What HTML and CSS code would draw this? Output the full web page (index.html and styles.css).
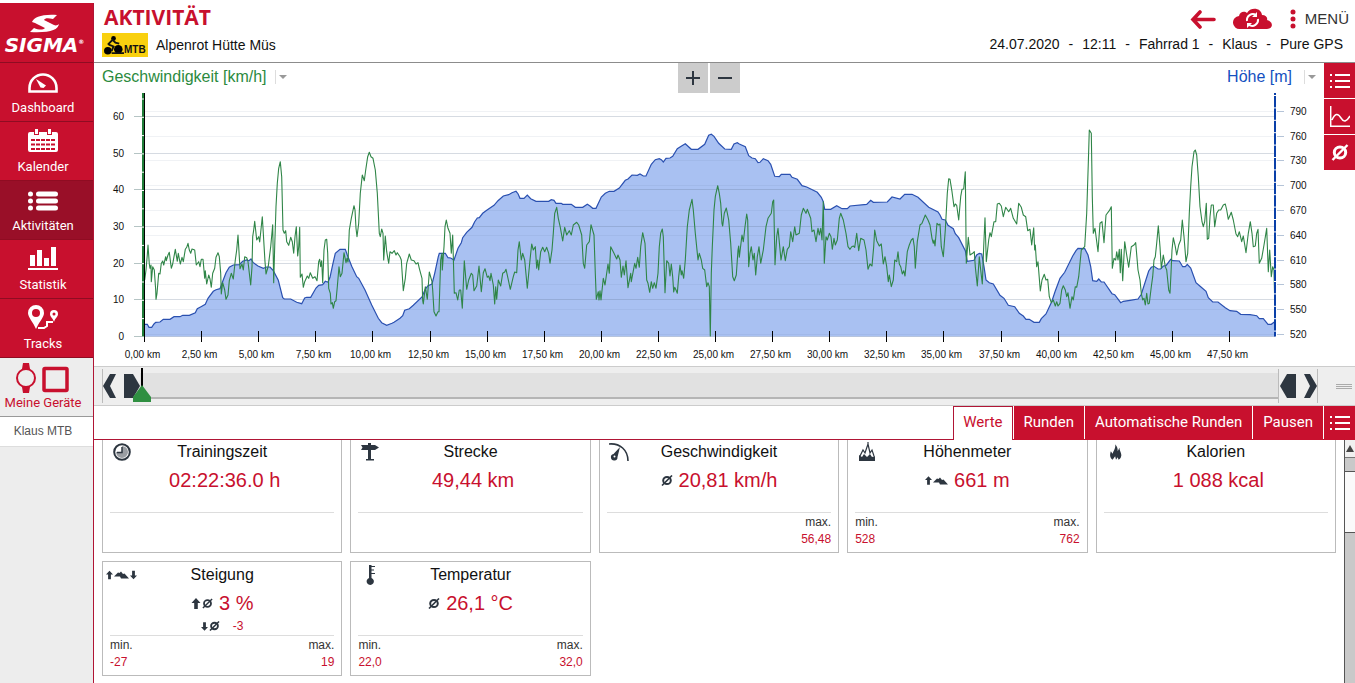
FILE: index.html
```html
<!DOCTYPE html>
<html lang="de">
<head>
<meta charset="utf-8">
<title>Aktivität</title>
<link rel="stylesheet" href="styles.css">
</head>
<body>
<svg class="defs" aria-hidden="true">
  <symbol id="list" viewBox="0 0 20 14"><path d="M0 1h2M0 7h2M0 13h2M5 1h15M5 7h15M5 13h15" stroke="currentColor" stroke-width="2" fill="none"/></symbol>
  <symbol id="avg" viewBox="0 0 12 11"><ellipse cx="6" cy="5.5" rx="3.8" ry="3.6" fill="none" stroke="currentColor" stroke-width="2"/><path d="M1 10.5L11 .5" stroke="currentColor" stroke-width="1.6"/></symbol>
  <symbol id="up" viewBox="0 0 9 11"><path d="M4.500 0L9 5H6.300V11H2.700V5H0z" fill="currentColor"/></symbol>
  <symbol id="hill" viewBox="0 0 15 8"><path d="M0 6L4 2l1.500 .5L7 1l2 2.500L10.500 3l4.500 5H7L6 6z" fill="currentColor"/></symbol>
</svg>
<div class="app">
  <nav class="side">
    <a class="logo" href="#" aria-label="Sigma">
      <svg width="30" height="20" viewBox="0 0 30 20"><path d="M2 8C4 3 12 0 27 1l-4 4c-5-1-8-1-9 1l10 5c2 1 4 0 5-1-1 6-9 9-29 8l4-4c5 2 9 2 11 0L5 9z" fill="#fff"/></svg>
      <span>SIGMA<sup>®</sup></span>
    </a>
    <a class="item" href="#">
      <svg width="30" height="20" viewBox="0 0 30 20"><path d="M1.500 18.500V15a13.500 13.500 0 0 1 27 0v3.500z" fill="none" stroke="#fff" stroke-width="2.600"/><path d="M8 6l10 6.500-2.500 2.500-3-.5z" fill="#fff"/></svg>
      <span>Dashboard</span></a>
    <a class="item" href="#">
      <svg width="30" height="23" viewBox="0 0 30 23"><path d="M2 3h4v3h5V3h8v3h5V3h4q2 0 2 2v16q0 2-2 2H2q-2 0-2-2V5q0-2 2-2z" fill="#fff"/><path d="M7 0h3v5H7zM20 0h3v5h-3z" fill="#fff"/><path d="M3 11h24M3 15.500h24M3 20h24" stroke="#c8102e" stroke-width="2" stroke-dasharray="4 1"/></svg>
      <span>Kalender</span></a>
    <a class="item active" href="#" aria-current="page">
      <svg width="30" height="20" viewBox="0 0 30 20"><path d="M2.500 3h0M2.500 10h0M2.500 17h0M10.500 3h17M10.500 10h17M10.500 17h17" stroke="#fff" stroke-width="5" stroke-linecap="round"/></svg>
      <span>Aktivitäten</span></a>
    <a class="item" href="#">
      <svg width="30" height="23" viewBox="0 0 30 23"><path d="M2 8h5v11H2zM9 3h5v16H9zM16 11h5v8h-5zM23 0h5v19h-5zM0 21h30v2H0z" fill="#fff"/></svg>
      <span>Statistik</span></a>
    <a class="item" href="#">
      <svg width="30" height="24" viewBox="0 0 30 24"><path d="M8 0a8 8 0 0 1 8 8c0 4-4 8-7 14L8 24C5 17 0 12 0 8a8 8 0 0 1 8-8zm0 4a4 4 0 1 0 0 8 4 4 0 0 0 0-8z" fill="#fff" fill-rule="evenodd"/><path d="M26 5a4 4 0 0 1 4 4c0 3-3 4-4 8-1-4-4-5-4-8a4 4 0 0 1 4-4zm0 2.500a1.500 1.500 0 1 0 0 3 1.500 1.500 0 0 0 0-3z" fill="#fff" fill-rule="evenodd"/><path d="M10 23h6l3-2v-4h6" fill="none" stroke="#fff" stroke-width="2"/></svg>
      <span>Tracks</span></a>
    <a class="item devices" href="#">
      <svg width="54" height="30" viewBox="0 0 54 30"><g fill="none" stroke="#c8102e"><circle cx="10" cy="15" r="9" stroke-width="2"/><rect x="28" y="5.500" width="23" height="22" rx="1" stroke-width="3.500"/></g><path d="M7 0h6l1 6H6zM6 24h8l-1 6H7z" fill="#c8102e"/></svg>
      <span>Meine Geräte</span></a>
    <a class="device" href="#">Klaus MTB</a>
  </nav>

  <main class="main">
    <header class="head">
      <div class="head-left">
        <h1>AKTIVITÄT</h1>
        <div class="activity">
          <span class="badge"><svg width="20" height="19" viewBox="0 0 21 20"><circle cx="4" cy="15.500" r="4"/><circle cx="15" cy="14" r="4.500"/><circle cx="10" cy="2.500" r="2.500"/><path d="M4 9L9 4l3 3 4 1M5 9l5 2-2 5M8 18h13" fill="none" stroke="#111" stroke-width="2"/></svg>MTB</span>
          <span>Alpenrot Hütte Müs</span>
        </div>
      </div>
      <div class="head-right">
        <div class="actions">
          <button type="button" aria-label="Zurück"><svg width="26" height="19" viewBox="0 0 26 19"><path d="M24 9.500H4M10 2L3 9.500l7 7.500" fill="none" stroke="#c8102e" stroke-width="3.600" stroke-linecap="round"/></svg></button>
          <button type="button" aria-label="Synchronisieren"><svg width="40" height="22" viewBox="0 0 40 22"><path d="M7 21a6.500 6.500 0 0 1-1-13C7 3 12 3 14 5c3-6 14-6 15 2 4 0 6 3 5 5 6 1 7 9 0 9z" fill="#c8102e"/><path d="M14 13a6 6 0 0 1 9-6M25 11a6 6 0 0 1-9 6" fill="none" stroke="#fff" stroke-width="2"/><path d="M24 4v5h-5zM14 20v-5h5z" fill="#fff"/></svg></button>
          <button type="button" class="menu"><svg width="6" height="20" viewBox="0 0 6 20"><path d="M3 3h0M3 10h0M3 17h0" stroke="#c8102e" stroke-width="5" stroke-linecap="round"/></svg>MENÜ</button>
        </div>
        <div class="meta"><span>24.07.2020</span><span>-</span><span>12:11</span><span>-</span><span>Fahrrad 1</span><span>-</span><span>Klaus</span><span>-</span><span>Pure GPS</span></div>
      </div>
    </header>

    <section class="graph">
      <div class="plot">
        <div class="plot-head">
          <button type="button" class="series speed">Geschwindigkeit [km/h]<i></i></button>
          <div class="zoom">
            <button type="button" aria-label="Vergrößern"><svg width="14" height="14" viewBox="0 0 14 14"><path d="M0 7h14M7 0v14" stroke="#2d3640" stroke-width="2"/></svg></button>
            <button type="button" aria-label="Verkleinern"><svg width="14" height="14" viewBox="0 0 14 14"><path d="M0 7h14" stroke="#2d3640" stroke-width="2"/></svg></button>
          </div>
          <button type="button" class="series height">Höhe [m]<i></i></button>
        </div>
        <svg id="chart" class="chart" viewBox="94 93 1230 273" role="img" aria-label="Geschwindigkeit und Höhe über die Strecke"></svg>
      </div>
      <div class="tools">
        <button type="button" aria-label="Liste"><svg width="20" height="14"><use href="#list"/></svg></button>
        <button type="button" aria-label="Kurve"><svg width="20" height="21" viewBox="0 0 20 21"><path d="M.700 0v20.300H20M2 14C5 7 8 7 11 12s6 3 9-2" fill="none" stroke="#fff" stroke-width="1.500"/></svg></button>
        <button type="button" aria-label="Durchschnitt"><svg width="18" height="17"><use href="#avg"/></svg></button>
      </div>
    </section>

    <section class="range">
      <div class="handles start">
        <button type="button" aria-label="Zurück scrollen"><svg width="13" height="24" viewBox="0 0 13 24"><path d="M13 0H7L0 12l7 12h6L7 12z" fill="#2d3640"/></svg></button>
        <button type="button" aria-label="Bereichsanfang"><svg width="16" height="24" viewBox="0 0 16 24"><path d="M0 0h9l7 12-7 12H0z" fill="#2d3640"/></svg></button>
      </div>
      <div class="track">
        <svg class="marker" width="18" height="34" viewBox="0 0 18 34"><path d="M8 0h2v19H8z" fill="#000"/><path d="M9 17l9 12v5H0v-5z" fill="#2f8f41"/></svg>
      </div>
      <div class="handles end">
        <button type="button" aria-label="Bereichsende"><svg width="16" height="24" viewBox="0 0 16 24"><path d="M16 0H7L0 12l7 12h9z" fill="#2d3640"/></svg></button>
        <button type="button" aria-label="Vor scrollen"><svg width="13" height="24" viewBox="0 0 13 24"><path d="M0 0h6l7 12-7 12H0l6-12z" fill="#2d3640"/></svg></button>
      </div>
      <div class="grip"></div>
    </section>

    <div class="tabs">
      <button type="button" class="current">Werte</button>
      <button type="button">Runden</button>
      <button type="button">Automatische Runden</button>
      <button type="button">Pausen</button>
      <button type="button" class="more" aria-label="Auswahl"><svg width="20" height="14"><use href="#list"/></svg></button>
    </div>

    <section class="values">
      <div class="cards">
        <article class="card">
          <header><svg width="18" height="18" viewBox="0 0 18 18"><circle cx="9" cy="9" r="7.800" fill="#fff" stroke="#2d3640" stroke-width="2"/><path d="M9 3v6H3a6 6 0 1 0 6-6z" fill="#9a9ea3"/><path d="M9 4v5.500H4" fill="none" stroke="#2d3640" stroke-width="1.500"/></svg><h2>Trainingszeit</h2></header>
          <p class="value plain">02:22:36.0 h</p><p class="sub"></p>
          <footer></footer>
        </article>
        <article class="card">
          <header><svg width="18" height="18" viewBox="0 0 18 18"><path d="M0 2h7V0h3v2h4l4 2.500L14 7h-4v9h3v1.500H5V16h2V7H0l1.500-2.500z" fill="#2d3640"/></svg><h2>Strecke</h2></header>
          <p class="value plain">49,44 km</p><p class="sub"></p>
          <footer></footer>
        </article>
        <article class="card">
          <header><svg width="20" height="18" viewBox="0 0 20 18"><path d="M0 1c11-1 19 6 19 17" fill="none" stroke="#2d3640" stroke-width="1.600"/><path d="M11 4L8.500 14a3.300 3.300 0 1 1-4-3z" fill="#2d3640"/><circle cx="5.500" cy="13.500" r="1" fill="#fff"/></svg><h2>Geschwindigkeit</h2></header>
          <p class="value"><svg width="12" height="11"><use href="#avg"/></svg>20,81 km/h</p><p class="sub"></p>
          <footer><dl class="right"><dt>max.</dt><dd>56,48</dd></dl></footer>
        </article>
        <article class="card">
          <header><svg width="16" height="19" viewBox="0 0 16 19"><path d="M1 14l3-6 2 3 3-9 2 9 2-3 2 6M9 4V0" fill="none" stroke="#2d3640" stroke-width="1.200"/><path d="M0 19v-6l3 2 2-3 3 3 3-3 2 3 3-1v5z" fill="#2d3640"/></svg><h2>Höhenmeter</h2></header>
          <p class="value"><span class="pair"><svg width="7" height="9"><use href="#up"/></svg><svg width="15" height="9"><use href="#hill"/></svg></span>661 m</p><p class="sub"></p>
          <footer><dl><dt>min.</dt><dd>528</dd></dl><dl class="right"><dt>max.</dt><dd>762</dd></dl></footer>
        </article>
        <article class="card">
          <header><svg width="12" height="18" viewBox="0 0 14 18"><path d="M3 18C-1 15 0 11 1 8l2 3c1-4 4-6 3-11 3 3 3 6 3 8l2-4c0 4 3 6 2 10-.500 2-1 3-3 4l-1-3-2 3-1-4z" fill="#2d3640"/></svg><h2>Kalorien</h2></header>
          <p class="value plain">1 088 kcal</p><p class="sub"></p>
          <footer></footer>
        </article>
        <article class="card">
          <header><span class="pair wide"><svg width="7" height="10"><use href="#up"/></svg><svg width="15" height="9"><use href="#hill"/></svg><svg class="down" width="7" height="10"><use href="#up"/></svg></span><h2>Steigung</h2></header>
          <p class="value"><span class="pair"><svg width="10" height="11"><use href="#up"/></svg><svg width="11" height="11"><use href="#avg"/></svg></span>3 %</p>
          <p class="sub"><span class="pair"><svg class="down" width="7" height="9"><use href="#up"/></svg><svg width="11" height="10"><use href="#avg"/></svg></span>-3</p>
          <footer><dl><dt>min.</dt><dd>-27</dd></dl><dl class="right"><dt>max.</dt><dd>19</dd></dl></footer>
        </article>
        <article class="card">
          <header><svg width="18" height="20" viewBox="0 0 18 20"><path d="M8 0h2.500v13a3.600 3.600 0 1 1-2.500 0z" fill="#2d3640"/><path d="M10 1.500h4M10 5h3M10 8.500h4" stroke="#2d3640" stroke-width="1.200"/></svg><h2>Temperatur</h2></header>
          <p class="value"><svg width="12" height="11"><use href="#avg"/></svg>26,1 °C</p><p class="sub"></p>
          <footer><dl><dt>min.</dt><dd>22,0</dd></dl><dl class="right"><dt>max.</dt><dd>32,0</dd></dl></footer>
        </article>
      </div>
      <div class="scroll"><div class="scroll-up"></div><div class="thumb"></div></div>
    </section>
  </main>
</div>
<script src="chart.js"></script>
</body>
</html>
```
FILE: styles.css
```css
* { box-sizing: border-box; }
body { margin: 0; background: #fff; color: #111; font-family: "Liberation Sans", Arial, sans-serif; font-size: 14px; }
button { border: 0; padding: 0; background: none; font: inherit; color: inherit; cursor: pointer; }
a { color: inherit; text-decoration: none; }
h1, h2, p, dl, dd { margin: 0; font-weight: 400; }
svg { display: block; flex: none; }
.defs { position: absolute; width: 0; height: 0; }
.app { display: flex; height: 100vh; padding-top: 3px; overflow: hidden; }

.side { width: 94px; flex: none; background: #ededed; border-right: 1px solid #b01535; font-family: Roboto, sans-serif; }
.logo { display: flex; flex-direction: column; align-items: center; height: 60px; padding: 11px 4px 0 0; background: #c8102e; color: #fff; border-bottom: 1px solid #8f0c22; }
.logo span { font: italic 700 20px/22px "DejaVu Sans", sans-serif; white-space: nowrap; }
.logo sup { font-size: 6px; line-height: 6px; vertical-align: 8px; }
.item { display: flex; flex-direction: column; align-items: center; justify-content: flex-end; gap: 6px; height: 59px; padding: 0 7px 4px 0; background: #c8102e; border-bottom: 1px solid #8f0c22; color: #fff; font-size: 13px; line-height: 18px; white-space: nowrap; }
.item.active { background: #990f28; }
.item.devices { gap: 1px; background: #ededed; color: #c8102e; border-bottom-color: #999; }
.device { display: block; height: 30px; padding-right: 7px; background: #fff; border-bottom: 1px solid #ddd; color: #555; font: 12px/28px "Liberation Sans", Arial, sans-serif; text-align: center; }

.main { flex: 1; min-width: 0; display: flex; flex-direction: column; }
.head { display: flex; justify-content: space-between; height: 60px; flex: none; padding: 0 6px 0 8px; border-bottom: 1px solid #8c8c8c; }
.head h1 { padding-left: 2px; color: #c8102e; font: 700 21px/28px "Open Sans", sans-serif; }
.activity { display: flex; align-items: center; gap: 8px; margin-top: 2px; line-height: 22px; }
.badge { display: flex; align-items: flex-end; width: 46px; height: 24px; padding: 2px; background: #f9d00f; color: #111; font-size: 10px; line-height: 10px; font-weight: 700; }
.head-right { display: flex; flex-direction: column; align-items: flex-end; gap: 4px; padding-top: 3px; }
.actions { display: flex; align-items: center; gap: 17px; height: 26px; }
.menu { display: flex; align-items: center; gap: 9px; font-size: 15px; line-height: 20px; color: #333; }
.meta { display: flex; gap: 9px; padding-right: 6px; line-height: 16px; white-space: nowrap; }

.graph { display: flex; flex: none; }
.plot { flex: 1; min-width: 0; }
.plot-head { display: grid; grid-template-columns: 1fr auto 1fr; height: 30px; padding: 0 8px; }
.series { display: flex; align-items: center; gap: 12px; height: 28px; font-size: 16px; }
.series i { display: flex; align-items: center; height: 14px; padding-left: 3px; border-left: 1px solid #ddd; }
.series i::after { content: ""; border: 4px solid transparent; border-top-color: #999; border-bottom: 0; }
.speed { color: #2b8a3e; gap: 8px; }
.height { justify-self: end; color: #1450c0; }
.zoom { display: flex; gap: 2px; }
.zoom button { display: grid; place-items: center; width: 30px; height: 30px; background: #ccc; }
.chart { width: 100%; height: auto; }
.chart text { font-size: 10px; fill: #111; }
.tools { display: flex; flex-direction: column; gap: 1px; width: 31px; flex: none; }
.tools button { display: grid; place-items: center; height: 35px; background: #c8102e; color: #fff; }

.range { display: flex; align-items: center; height: 40px; flex: none; padding: 0 3px 0 8px; background: #eee; border: solid #ccc; border-width: 1px 0; }
.handles { display: flex; align-items: center; gap: 8px; height: 34px; border-left: 1px solid #bbb; }
.handles.end { padding-left: 1px; border-right: 1px solid #bbb; }
.track { position: relative; flex: 1; height: 26px; background: #e1e1e1; border-bottom: 2px solid #b5b5b5; }
.marker { position: absolute; left: -7px; top: -5px; }
.grip { width: 16px; height: 5px; margin-left: 18px; border: solid #aaa; border-width: 1px 0; background: linear-gradient(#eee 1px, #aaa 1px, #aaa 2px, #eee 2px); }

.tabs { display: flex; justify-content: flex-end; gap: 1px; height: 34px; flex: none; border-bottom: 1px solid #b01535; }
.tabs button { height: 34px; padding: 0 10px 3px; background: #c8102e; color: #fff; font: 15px/30px Roboto, sans-serif; white-space: nowrap; }
.tabs .current { padding: 0 9px 3px; background: #fff; color: #c8102e; border: solid #b01535; border-width: 1px 1px 0; }
.tabs .more { display: grid; place-items: center; width: 31px; padding: 0; }

.values { display: flex; flex: 1; min-height: 0; overflow: hidden; }
.cards { flex: 1; display: grid; grid-template-columns: repeat(5, minmax(0, 1fr)); gap: 8px; align-content: start; margin: -2px 8px 0; }
.card { border: 1px solid #bbb; padding: 0 7px; }
.card header { display: grid; grid-template-columns: 24px 1fr 24px; align-items: center; justify-items: center; height: 25px; }
.card h2 { font-size: 16px; line-height: 25px; }
.value { display: flex; align-items: center; justify-content: center; gap: 6px; height: 32px; color: #c8102e; font-size: 20px; white-space: nowrap; }
.value svg, .sub svg, .pair svg { color: #2d3640; }
.value.plain { padding-left: 5px; }
.sub { display: flex; align-items: center; justify-content: center; gap: 13px; height: 16px; padding-bottom: 2px; color: #c8102e; font-size: 12px; }
.pair { display: flex; align-items: center; gap: 1px; }
.pair.wide { margin-right: 2px; justify-self: start; margin-left: -4px; }
.down { transform: rotate(180deg); }
.card footer { display: flex; height: 40px; padding-top: 1px; border-top: 1px solid #ddd; font-size: 12px; line-height: 17px; }
.card dt { color: #333; }
.card dd { color: #c8102e; }
.right { margin-left: auto; text-align: right; }
.scroll { width: 11px; flex: none; background: #c9c9c9; border-left: 1px solid #555; }
.scroll-up { display: grid; place-items: center; height: 18px; background: #f0f0f0; border-bottom: 1px solid #777; }
.scroll-up::after { content: ""; border: 4px solid transparent; border-bottom: 7px solid #444; border-top: 0; }
.thumb { height: 62px; margin-top: 13px; background: #fafafa; border: solid #555; border-width: 1px 0; }
```
FILE: chart.js
```js
// Each chunk is [x offset, y offset, "x,y ..."] in thirds of a chart unit.
const height = [
  [0, 0, "134,793 142,793 147,802 155,802 162,792 167,787 180,786 190,778 210,778 222,770 240,770 248,766 268,766 286,758 292,746 303,740 316,733 324,715 340,694 348,689 360,686 366,670 378,638 388,622 400,615 418,614 428,604 440,600 447,602 453,597 460,608 474,618 490,625 500,621 510,621 520,632 535,661 548,713 553,717 572,717 590,727 605,731 614,714 620,712 632,712 648,684 656,676 668,674 676,664 684,667 690,652 698,614 706,580 720,568 736,568 742,585 755,619 770,650 776,655 795,690 815,735 835,775 845,788 860,796"],
  [870, 0, "6,790 12,787 30,775 38,767 44,751 58,746 70,736 96,711 106,687 114,677 126,672 134,640 145,590 148,580 166,580 174,593 182,594 192,600 204,565 214,548 218,533 230,517 246,502 254,485 262,474 268,473 278,460 290,451 312,436 324,422 340,408 356,404 366,398 378,394 384,401 390,415 402,415 412,405 422,416 438,424 476,424 484,419 492,421 498,430 514,430 518,433 544,433 556,442 578,442 592,433 600,438 608,445 618,445 634,411 646,400 658,394 672,394 688,384 706,361 714,357 726,345 742,346 750,342 760,348 768,348 784,313 796,299 808,296 814,299 820,306 828,295 840,294 848,289 862,266 876,257"],
  [1710, 0, "46,251 64,268 84,268 104,253 116,226 124,223 132,229 146,250 164,267 184,268 192,252 202,248 208,252 226,260 236,287 246,294 256,296 264,308 270,307 280,296 294,302 302,313 314,349 328,350 334,343 360,343 366,352 382,358 396,377 410,381 442,397 454,412 460,425 464,448 482,448 500,437 516,446 532,446 540,438 590,433 602,421 610,427 652,426 666,411 690,417 704,403 726,403 744,412 776,442 804,456"],
  [2520, 60, "0,405 6,418 16,420 24,436 40,446 46,461 56,473 76,512 82,544 102,541 110,525 118,520 125,522 132,560 138,600 148,608 160,612 180,646 192,655 205,676 224,680 238,700 250,708 258,718 268,718 282,727 298,727 304,716 318,702 335,665 345,635 360,595 374,577 398,528 408,512 414,505 434,506 444,525 452,560 458,602 470,604 476,597 484,606 492,606 516,641 524,644 542,668 550,664 570,661 594,657 604,643 626,573 634,562"],
  [3120, 60, "42,559 54,567 62,567 70,558 78,557 92,538 98,542 118,543 128,560 136,560 142,553 152,564 168,608 182,620 198,634 205,653 218,666 234,666 256,683 270,692 290,694 302,703 330,704 350,707 358,716 370,716 384,733 394,733 404,725"]
];
const speed = [
  [0, 0, "134,660 138,630 142,585 144,555 148,612 150,625 153,615 154,665 158,620 163,630 167,690 168,718 171,700 176,640 180,642 184,610 188,603 191,615 197,590 199,602 204,585 208,577 214,625 218,612 222,590 226,568 232,604 235,580 241,612 246,592 250,605 256,568 260,562 264,550 268,570 272,580 276,567 284,570 289,615 296,605 300,620 304,598 309,598 314,655 316,632 320,672 326,645 330,657 334,682 338,640 344,625 348,592 354,578 358,590 362,640 364,702 368,668 374,690 378,718 384,705 388,662 394,640 400,657 406,600 410,570 414,525 418,590 420,626 426,612 430,630 434,590 440,593 444,605 452,675 456,620 458,530 461,510 464,484 470,540 476,530 479,546 487,470 490,520 495,605 498,642 505,618 512,560 518,494 521,668 524,560 528,440 532,370 536,325 541,305 545,350 549,510 553,520 557,512 560,545 566,556 572,532 577,545 581,580 585,530 589,500 593,588 596,560 599,502 601,652 606,642 610,682 614,665 622,648 626,655 631,638 638,655 645,650 651,662 656,605 659,598 662,620 665,602 668,668 672,570 676,540 680,538 683,580 686,685 691,700 693,732 697,728 700,745 704,725 708,722 712,680 717,620 721,650 726,640 732,578 738,608 741,595 744,606 748,510 754,475 762,437 765,450 768,505 771,530 776,490 781,400 787,345 793,362 797,330 803,290 808,277 813,290 819,295 826,330 832,400 838,520 841,530 845,507 849,520 851,600 856,528 860,575 866,610 870,575 876,580 883,572 888,585 892,578"],
  [870, 0, "30,590 34,600 40,692 46,655 50,610 58,582 64,600 72,602 78,612 84,608 88,625 96,655 98,722 100,732 106,680 112,718 118,636 126,665 128,690 132,755 138,768 144,755 147,755 152,600 156,580 157,630 162,560 165,500 169,480 174,505 180,520 184,580 188,525 193,700 198,698 203,720 208,690 212,690 217,745 223,602 230,688 236,660 244,640 248,645 252,692 260,678 267,618 274,695 280,638 285,626 292,652 296,648 300,662 303,640 310,675 314,732 317,680 320,718 325,660 332,678 338,640 344,636 348,628 354,655 361,688 370,650 374,636 380,638 384,570 388,545 394,600 398,580 404,600 412,685 420,600 425,552 430,570 436,560 440,625 443,600 446,630 452,575 458,562 464,575 470,562 476,580 480,610 486,570 490,520 494,460 500,442 505,475 511,502 518,543 524,502 530,525 538,512 544,525 550,495 560,487 566,495 575,525 580,610 584,625 590,555 598,545 603,494 612,525 616,640 619,718 625,695 627,720 630,692 633,720 640,655 645,675 654,612 658,640 662,560 672,580 680,597 684,585 690,600 694,652 699,618 703,645 708,602 714,683 722,640 724,665 734,610 738,625 743,592 748,622 752,560 758,518 765,550 770,660 774,670 779,697 784,665 788,685 793,668 798,685 804,640 808,560 812,520 817,507 820,530 825,698 830,602 836,610"],
  [1710, 0, "0,648 4,612 8,650 11,696 14,682 18,690 22,700 26,650 30,615 34,645 36,632 41,655 46,600 52,500 58,450 66,418 70,450 76,520 84,600 88,580 94,600 98,625 104,630 110,680 114,668 118,680 121,828 124,640 127,560 132,450 136,410 143,377 148,400 152,430 156,490 158,498 163,460 169,444 176,480 182,550 188,650 193,662 199,645 204,570 206,558 208,592 216,525 220,545 225,500 230,462 233,480 236,620 240,580 244,560 249,600 253,580 257,645 262,590 267,560 272,610 280,570 288,500 294,475 304,460 308,425 311,420 315,614 320,530 324,505 333,600 340,560 346,602 352,568 358,560 362,515 368,545 374,500 378,525 388,520 394,465 400,445 408,460 412,448 422,475 426,515 432,510 438,545 444,505 448,525 452,505 456,540 460,425 463,610 468,530 472,540 478,520 483,530 487,568 492,535 496,555 502,540 508,475 512,460 520,480 528,520 534,560 540,568 545,560 550,558 554,562 560,520 566,572 572,535 582,540 588,570 594,628 600,612 606,618 611,560 614,510 620,542 628,558 634,552 640,612 645,590 650,620 655,665 658,645 664,680 670,660 674,600 680,605 684,575 688,612 692,620 697,642 701,632 705,648 712,575 718,555 724,540 729,535 733,560 736,625 742,545 750,495 756,490 766,465 774,480 780,495 786,535 790,550 792,540 795,558 801,490 806,495"],
  [2520, 60, "0,432 4,500 10,530 16,450 22,340 26,296 30,298 36,335 42,380 46,372 50,376 56,420 62,350 66,328 71,327 76,275 79,550 85,472 90,525 98,520 103,515 106,560 112,618 118,530 122,570 127,612 131,500 135,413 139,545 146,480 150,458 154,470 162,425 167,425 172,372 178,370 184,378 190,410 197,382 206,395 212,385 220,415 230,432 236,370 244,382 250,405 257,410 263,452 270,448 275,495 281,443 284,510 286,495 290,560 294,545 301,633 306,600 313,583 318,600 323,598 328,650 334,668 340,660 346,678 350,665 354,678 360,670 365,630 370,617 376,630 380,650 384,638 390,685 396,650 400,660 406,620 410,622 416,590 424,510 434,500 440,400 445,250 448,150 454,160 457,350 460,460 465,445 474,515 480,430 486,425 492,488 498,405 508,392 514,380 517,565 522,535 527,540 530,515 534,540 538,508 541,578 544,508 548,602 554,485 560,525 566,562 574,500 582,495 587,488 594,570"],
  [3120, 60, "0,600 4,640 8,660 12,655 16,675 20,640 24,672 28,670 34,620 38,590 42,540 46,530 50,490 55,437 60,500 64,565 70,525 76,560 80,570 86,630 90,640 93,580 96,510 100,473 106,500 110,525 116,495 122,480 127,420 132,470 138,545 143,520 148,400 152,320 156,260 162,215 166,210 170,225 175,290 180,380 186,425 190,440 194,425 199,370 202,478 206,475 210,410 214,375 220,375 224,440 230,400 236,390 242,390 250,375 256,372 260,390 265,418 274,397 280,420 288,462 293,470 298,455 305,485 310,468 318,518 325,460 331,425 336,460 340,500 346,498 350,460 354,448 358,550 365,535 372,495 380,445 385,575 389,510 394,590 398,560 402,570 404,660"]
];

const points = series => series.map(([dx, dy, text]) => text.split(" ").map(pair => {
  const [x, y] = pair.split(",").map(Number);
  return ((x + dx) / 3 + 100).toFixed(1) + "," + ((y + dy) / 3 + 60).toFixed(1);
}).join(" ")).join(" ");

const line = (x1, y1, x2, y2, color, width = 1) =>
  `<path d="M${x1} ${y1}L${x2} ${y2}" stroke="${color}" stroke-width="${width}"/>`;
const label = (x, y, text, anchor) => `<text x="${x}" y="${y}" text-anchor="${anchor}">${text}</text>`;

const left = 144.5, right = 1275, base = 336.5;
const heightPoints = points(height);
let out = `<polygon points="${left},${base} ${heightPoints} ${right},${base}" fill="#a9c1f2"/>`;

for (let v = 0; v <= 60; v += 10) {
  const y = Math.round(335.6 - v * 3.655) + 0.5;
  out += line(134, y, 142, y, "#b5c4c4") + line(left, y, right, y, "rgba(90,110,140,.25)");
  out += label(124, y + 3, v, "end");
}
for (let v = 520; v <= 790; v += 30) {
  const y = Math.round(334 - (v - 520) * 0.8267) + 0.5;
  out += line(1277, y, 1284, y, "#b5c4d8") + line(left, y, right, y, "rgba(90,110,140,.09)");
  out += label(1290, y + 3, v, "start");
}
out += `<polyline points="${heightPoints}" fill="none" stroke="#2a50b0" stroke-width="1.2"/>`;
out += `<polyline points="${points(speed)}" fill="none" stroke="#2f8547" stroke-width="1.1" stroke-linejoin="round"/>`;
out += line(143, 93, 143, base, "#1f7d38", 2) + line(144.5, 93, 144.5, base, "#000");
out += line(1275, 93, 1275, base, "#0a3fa8", 2);
for (let y = 99; y < base; y += 18.3) out += line(142, y, 144, y, "#fff");
for (let y = 95.5; y < base; y += 12.4) out += line(1274, y, 1276, y, "#fff");
for (let i = 0; i < 20; i++) {
  const x = Math.round(144 + i * 57.1) + 0.5;
  out += line(x, 331, x, 342, "#000");
  out += label(x - 2, 358, (i * 2.5).toFixed(2).replace(".", ",") + " km", "middle");
}
document.getElementById("chart").innerHTML = out;
```
